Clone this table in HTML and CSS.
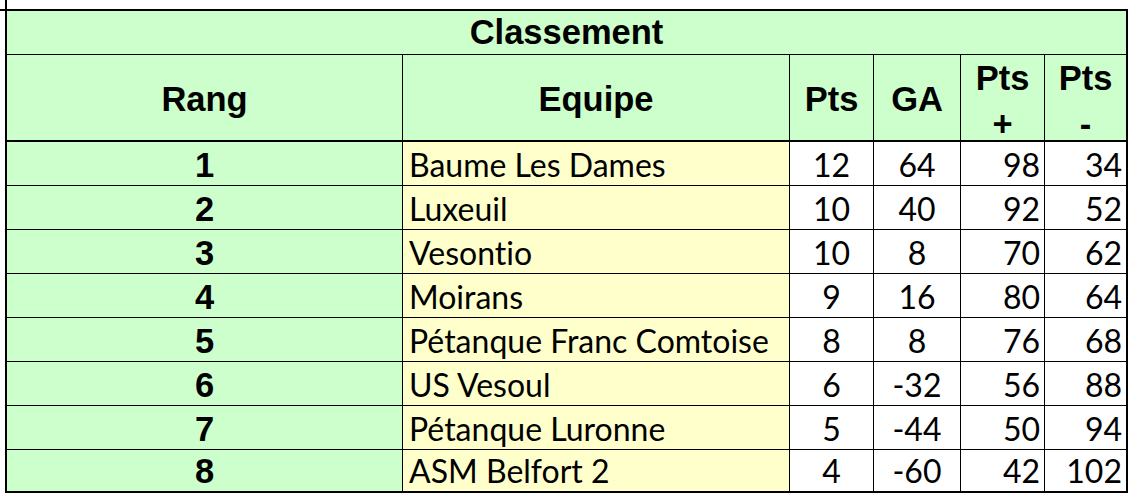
FILE: index.html
```html
<!DOCTYPE html>
<html lang="fr">
<head>
<meta charset="utf-8">
<title>Classement</title>
<link rel="stylesheet" href="styles.css">
</head>
<body>
<div class="sheet">
  <div class="title">Classement</div>
  <div class="grid head">
    <div class="hcell">Rang</div>
    <div class="hcell">Equipe</div>
    <div class="hcell">Pts</div>
    <div class="hcell">GA</div>
    <div class="hcell two">Pts<br>+</div>
    <div class="hcell two">Pts<br>-</div>
  </div>
  <div class="grid row"><div class="rank">1</div><div class="team">Baume Les Dames</div><div class="num">12</div><div class="num">64</div><div class="num right">98</div><div class="num right">34</div></div>
  <div class="grid row"><div class="rank">2</div><div class="team">Luxeuil</div><div class="num">10</div><div class="num">40</div><div class="num right">92</div><div class="num right">52</div></div>
  <div class="grid row"><div class="rank">3</div><div class="team">Vesontio</div><div class="num">10</div><div class="num">8</div><div class="num right">70</div><div class="num right">62</div></div>
  <div class="grid row"><div class="rank">4</div><div class="team">Moirans</div><div class="num">9</div><div class="num">16</div><div class="num right">80</div><div class="num right">64</div></div>
  <div class="grid row"><div class="rank">5</div><div class="team">Pétanque Franc Comtoise</div><div class="num">8</div><div class="num">8</div><div class="num right">76</div><div class="num right">68</div></div>
  <div class="grid row"><div class="rank">6</div><div class="team">US Vesoul</div><div class="num">6</div><div class="num">-32</div><div class="num right">56</div><div class="num right">88</div></div>
  <div class="grid row"><div class="rank">7</div><div class="team">Pétanque Luronne</div><div class="num">5</div><div class="num">-44</div><div class="num right">50</div><div class="num right">94</div></div>
  <div class="grid row last"><div class="rank">8</div><div class="team">ASM Belfort 2</div><div class="num">4</div><div class="num">-60</div><div class="num right">42</div><div class="num right">102</div></div>
</div>
</body>
</html>
```
FILE: styles.css
```css
html, body {
  margin: 0;
  padding: 0;
  background: #ffffff;
}

body {
  color: #000000;
  font-family: "Liberation Sans", Arial, sans-serif;
}

.sheet {
  position: relative;
  margin: 9px 0 0 5px;
  width: 1123px;
  border: 2px solid #000000;
  box-sizing: border-box;
}

/* cropped gridline stubs at the top-left corner */
.sheet::before {
  content: "";
  position: absolute;
  left: -2px;
  top: -11px;
  width: 2px;
  height: 9px;
  background: #000000;
}

.sheet::after {
  content: "";
  position: absolute;
  left: -7px;
  top: -2px;
  width: 5px;
  height: 2px;
  background: #000000;
}

.title {
  height: 43px;
  border-bottom: 1px solid #000000;
  background: #ccffcc;
  font-weight: bold;
  font-size: 34.5px;
  line-height: 43px;
  text-align: center;
}

.grid {
  display: grid;
  grid-template-columns: 396px 387px 84px 87px 84px 81px;
}

.grid > div {
  border-right: 1px solid #000000;
  min-width: 0;
}

.grid > div:last-child {
  border-right: none;
}

.head {
  height: 85px;
  grid-template-rows: 85px;
  border-bottom: 2px solid #000000;
  background: #ccffcc;
}

.hcell {
  display: flex;
  align-items: center;
  justify-content: center;
  padding-top: 4px;
  font-weight: bold;
  font-size: 34.5px;
  line-height: normal;
  text-align: center;
}

.hcell.two {
  display: block;
  padding-top: 0;
  line-height: 46px;
  white-space: nowrap;
}

.row {
  height: 43px;
  grid-template-rows: 43px;
  border-bottom: 1px solid #000000;
}

.row.last {
  height: 41px;
  grid-template-rows: 41px;
  border-bottom: none;
}

.rank {
  display: flex;
  align-items: flex-end;
  justify-content: center;
  background: #ccffcc;
  font-weight: bold;
  font-size: 34.5px;
  line-height: normal;
}

.team,
.num {
  display: flex;
  align-items: flex-end;
  font-family: Lato, "Open Sans", sans-serif;
  font-size: 32px;
  font-variant-ligatures: none;
  line-height: normal;
  padding-bottom: 1px;
  box-sizing: border-box;
}

.team {
  background: #ffffcc;
  padding-left: 6px;
  white-space: nowrap;
}

.num {
  justify-content: center;
  background: #ffffff;
}

.num.right {
  justify-content: flex-end;
  padding-right: 4px;
}
```
